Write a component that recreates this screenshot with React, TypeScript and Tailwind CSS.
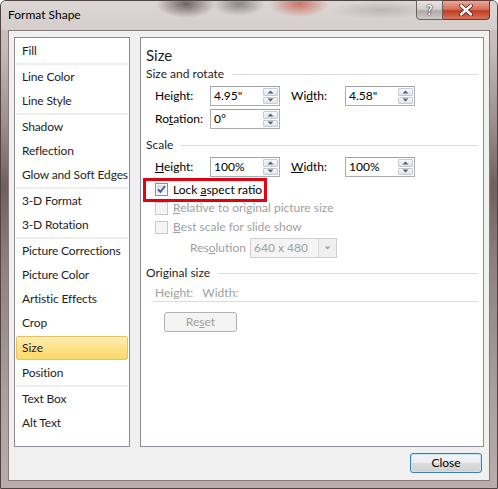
import React from 'react';

type ItemGroup = string[];

const GROUPS: ItemGroup[] = [
  ['Fill'],
  ['Line Color', 'Line Style'],
  ['Shadow', 'Reflection', 'Glow and Soft Edges'],
  ['3-D Format', '3-D Rotation'],
  ['Picture Corrections', 'Picture Color', 'Artistic Effects', 'Crop', 'Size', 'Position'],
  ['Text Box', 'Alt Text'],
];

const Arrow = ({ up, color = '#4d6185' }: { up?: boolean; color?: string }) => (
  <svg width="7" height="4" viewBox="0 0 7 4">
    <path d={up ? 'M0.5 3.5 L3.5 0.5 L6.5 3.5Z' : 'M0.5 0.5 L3.5 3.5 L6.5 0.5Z'} fill={color} />
  </svg>
);

const Spin = ({ value }: { value: string }) => (
  <div className="flex h-[20px] w-[70px] border border-[#abadb3] border-t-[#9ea1a8] bg-white">
    <div className="flex-1 pl-[3px] text-[12px] leading-[18px] text-black">{value}</div>
    <div className="flex w-[17px] flex-col gap-[1px] p-[1px]">
      <div className="flex flex-1 items-center justify-center rounded-[1px] border border-[#c6cbd2] bg-gradient-to-b from-[#f8f9fa] to-[#e0e4e9]">
        <Arrow up />
      </div>
      <div className="flex flex-1 items-center justify-center rounded-[1px] border border-[#c6cbd2] bg-gradient-to-b from-[#f8f9fa] to-[#e0e4e9]">
        <Arrow />
      </div>
    </div>
  </div>
);

const Check = ({ checked, disabled }: { checked?: boolean; disabled?: boolean }) => (
  <div
    className={`flex h-[13px] w-[13px] shrink-0 items-center justify-center border p-[1px] ${
      disabled ? 'border-[#c8c8c8] bg-[#f7f7f7]' : 'border-[#8e8f8f] bg-white'
    }`}
  >
    <div
      className={`flex h-full w-full items-center justify-center ${
        disabled ? 'bg-[#f4f4f4]' : 'bg-gradient-to-br from-[#d4d7dc] to-[#fafafa]'
      }`}
    >
      {checked && (
        <svg width="9" height="9" viewBox="0 0 9 9">
          <path d="M1 4.5 L3.5 7 L8 1" fill="none" stroke="#43589a" strokeWidth="1.8" />
        </svg>
      )}
    </div>
  </div>
);

const Section = ({ title }: { title: string }) => (
  <div className="flex h-[16px] items-center gap-[8px] leading-[16px] text-[#1e1e1e]">
    <span>{title}</span>
    <div className="h-px flex-1 bg-[#dadcdf]" />
  </div>
);

export default function App() {
  return (
    <div className="h-[489px] w-[498px] bg-white font-['Lato','Noto_Sans',sans-serif] text-[12px]">
      <div className="flex h-full w-full flex-col rounded-t-[6px] border border-[#4d4443] bg-[linear-gradient(180deg,#d2cbc9_0%,#c4bab8_10%,#9c8f8c_25%,#6f605c_38%,#8f8280_55%,#aa9f9d_80%,#b9aeab_100%)]">
        {/* Title bar */}
        <div className="flex h-[29px] rounded-t-[5px] bg-[radial-gradient(ellipse_30px_14px_at_185px_3px,#6e6463,transparent),radial-gradient(ellipse_26px_12px_at_238px_3px,#8a8484,transparent),radial-gradient(ellipse_30px_13px_at_298px_3px,#cc7466,transparent),radial-gradient(ellipse_50px_9px_at_380px_9px,#bdb6b5,transparent),linear-gradient(180deg,#dcd6d4,#d4cdcb)]">
          <div className="pl-[7px] pt-[6px] leading-[16px] text-black">Format Shape</div>
          <div className="ml-auto mr-[7px] flex h-[20px] -mt-px">
            <div className="flex w-[27px] items-center justify-center rounded-bl-[4px] border border-[#6b6362] bg-[linear-gradient(180deg,#e9e5e5_0%,#d3cdcc_45%,#b2aaa9_55%,#cfc9c8_100%)] text-[13px] font-bold leading-none text-white [text-shadow:0_0_2px_#333,0_0_1px_#000]">
              ?
            </div>
            <div className="flex w-[47px] items-center justify-center rounded-br-[4px] border border-l-0 border-[#6b3b35] bg-[linear-gradient(180deg,#e8a898_0%,#d8705d_45%,#c13c25_55%,#d9735c_100%)]">
              <svg width="14" height="12" viewBox="0 0 14 12">
                <path d="M2 1.5 L12 10.5 M12 1.5 L2 10.5" stroke="#5a1a12" strokeWidth="4" strokeLinecap="round" />
                <path d="M2 1.5 L12 10.5 M12 1.5 L2 10.5" stroke="#ffffff" strokeWidth="2.4" strokeLinecap="round" />
              </svg>
            </div>
          </div>
        </div>

        {/* Client area */}
        <div className="mx-[7px] mb-[7px] flex flex-1 flex-col border border-[#857b7a] bg-[#f0f0f0] px-[5px] pt-[6px] pb-[7px]">
          <div className="flex h-[410px] gap-[10px]">
            {/* Category list */}
            <div className="flex w-[116px] shrink-0 flex-col overflow-hidden border border-[#898c95] bg-white pt-px text-[#1e1e1e]">
              {GROUPS.map((group, gi) => (
                <div key={gi} className="flex flex-col">
                  {gi > 0 && <div className="mx-px h-[2px] bg-[#eeeeee]" />}
                  {group.map(item =>
                    item === 'Size' ? (
                      <div key={item} className="h-[26px] px-px py-px">
                        <div className="flex h-[24px] items-center rounded-[2px] border border-[#e5c365] bg-[linear-gradient(180deg,#fdeeb3_0%,#fde28a_50%,#fbd866_100%)] pl-[5px] leading-[16px]">
                          {item}
                        </div>
                      </div>
                    ) : (
                      <div key={item} className="flex h-[24px] items-center whitespace-nowrap pl-[7px] leading-[16px] tracking-[-0.15px]">
                        {item}
                      </div>
                    )
                  )}
                </div>
              ))}
            </div>

            {/* Size panel */}
            <div className="flex flex-1 flex-col border border-[#898c95] bg-white pl-[5px] pr-[5px] text-black">
              <div className="mt-[7px] h-[20px] text-[15px] leading-[20px] text-[#1e1e1e]">Size</div>
              <div className="mt-px">
                <Section title="Size and rotate" />
              </div>
              <div className="mt-[4px] flex h-[20px] items-center pl-[9px] leading-[16px]">
                <span className="w-[55px]">
                  Hei<u>g</u>ht:
                </span>
                <Spin value={'4.95"'} />
                <span className="ml-[11px] w-[54px]">
                  Wi<u>d</u>th:
                </span>
                <Spin value={'4.58"'} />
              </div>
              <div className="mt-[3px] flex h-[20px] items-center pl-[9px] leading-[16px]">
                <span className="w-[55px]">
                  Ro<u>t</u>ation:
                </span>
                <Spin value="0°" />
              </div>

              <div className="mt-[8px]">
                <Section title="Scale" />
              </div>
              <div className="mt-[4px] flex h-[20px] items-center pl-[9px] leading-[16px]">
                <span className="w-[55px]">
                  <u>H</u>eight:
                </span>
                <Spin value="100%" />
                <span className="ml-[11px] w-[54px]">
                  <u>W</u>idth:
                </span>
                <Spin value="100%" />
              </div>

              <div className="relative z-10 -ml-[3px] -mb-[3px] mt-px h-[24px] w-[124px] border-[3px] border-[#e3000f]">
                <div className="flex h-full items-center gap-[5px] pb-px pl-[9px] leading-[16px]">
                  <Check checked />
                  <span className="whitespace-nowrap">
                    Lock <u>a</u>spect ratio
                  </span>
                </div>
              </div>
              <div className="flex h-[18px] items-center gap-[5px] pl-[9px] leading-[16px] text-[#a0a0a0]">
                <Check disabled />
                <span>
                  <u>R</u>elative to original picture size
                </span>
              </div>
              <div className="mt-px flex h-[18px] items-center gap-[5px] pl-[9px] leading-[16px] text-[#a0a0a0]">
                <Check disabled />
                <span>
                  <u>B</u>est scale for slide show
                </span>
              </div>
              <div className="mt-[2px] flex h-[20px] items-center pl-[44px] leading-[16px] text-[#a0a0a0]">
                <span className="w-[60px]">
                  Res<u>o</u>lution
                </span>
                <div className="flex h-[20px] w-[87px] border border-[#cfcfcf] bg-[#f4f4f4]">
                  <div className="flex-1 pl-[3px] leading-[18px]">640 x 480</div>
                  <div className="flex w-[18px] items-center justify-center border-l border-[#d9d9d9] bg-[#f0f0f0]">
                    <Arrow color="#a8a8a8" />
                  </div>
                </div>
              </div>

              <div className="mt-[7px]">
                <Section title="Original size" />
              </div>
              <div className="ml-[7px] mt-[4px] flex h-[17px] gap-[9px] border-b border-[#dadcdf] pl-[2px] leading-[16px] text-[#a0a0a0]">
                <span>Height:</span>
                <span>Width:</span>
              </div>
              <div className="ml-[18px] mt-[10px] flex h-[20px] w-[73px] items-center justify-center rounded-[3px] border border-[#adb2b5] bg-[#f4f4f4] leading-[16px] text-[#a0a0a0]">
                <span>
                  Re<u>s</u>et
                </span>
              </div>
            </div>
          </div>

          <div className="mt-[6px] flex justify-end pr-[2px]">
            <div className="flex h-[20px] w-[72px] items-center justify-center rounded-[3px] border border-[#3c7fb1] bg-[linear-gradient(180deg,#f4f4f4_0%,#ececec_50%,#dcdcdc_50%,#d0d0d0_100%)] leading-[16px] text-black shadow-[inset_0_0_0_1px_#c4e5f6]">
              Close
            </div>
          </div>
        </div>
      </div>
    </div>
  );
}
